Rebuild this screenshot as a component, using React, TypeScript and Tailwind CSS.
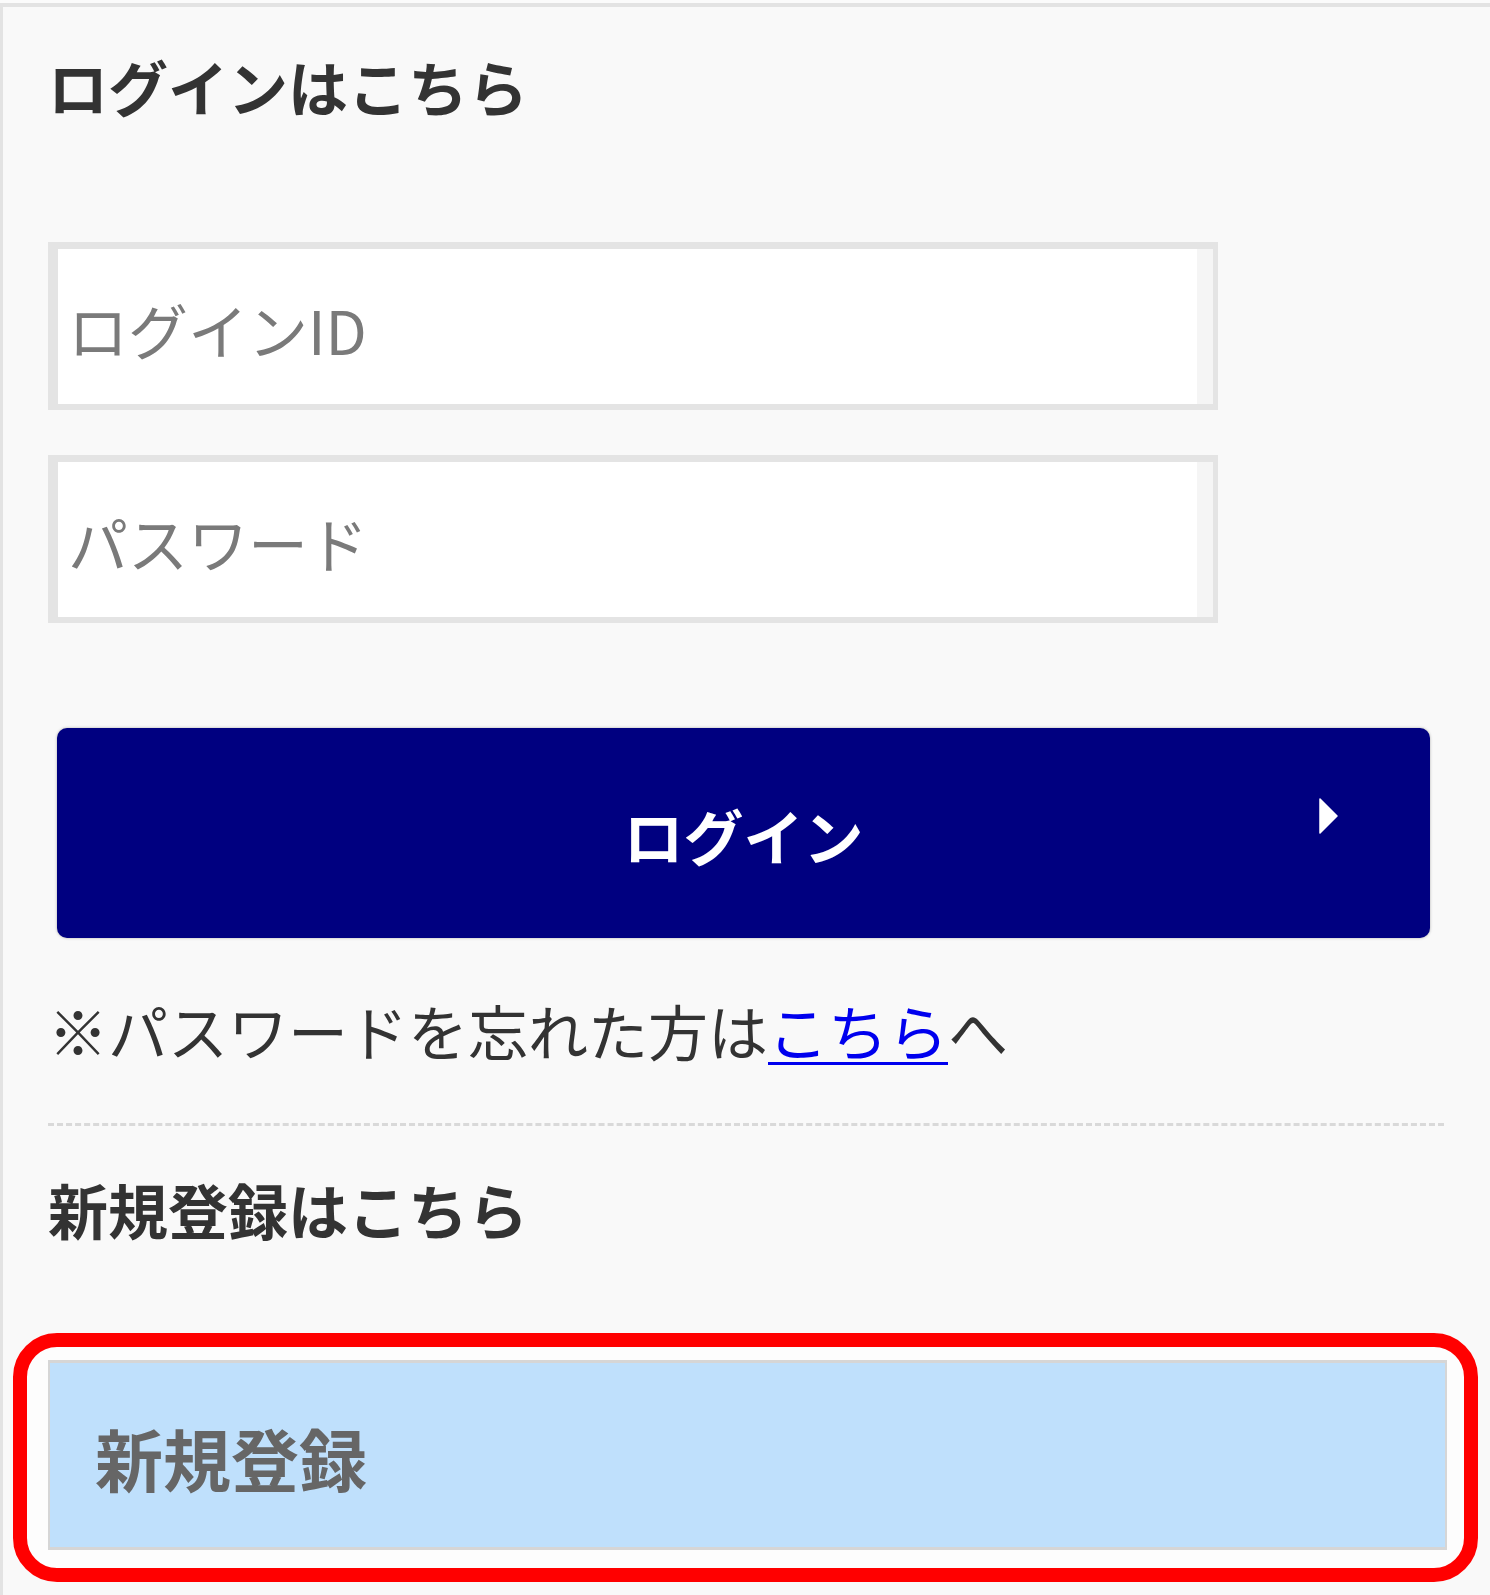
import React from 'react';

// login panel (mobile style, scaled up)
const jp = "font-['Noto_Sans_CJK_JP','Noto_Sans',sans-serif]";

const TextField: React.FC<{ placeholder: string; type?: string; className?: string }> = ({
  placeholder,
  type = 'text',
  className = '',
}) => (
  <div
    className={`flex h-[168px] w-[1170px] items-center border-b-[6px] border-l-[10px] border-r-[5px] border-t-[7px] border-[#e4e4e4] bg-white shadow-[inset_-16px_0_0_#f5f5f5] ${className}`}
  >
    <input
      type={type}
      placeholder={placeholder}
      className={`mt-[4px] w-full bg-transparent pl-[10px] text-[60px] leading-[72px] text-[#333] outline-none placeholder:text-[#7a7a7a] ${jp}`}
    />
  </div>
);

export default function App() {
  return (
    <div className={`min-h-[1595px] w-full bg-[#fbfbfb] pt-[3px] ${jp}`}>
      <div className="flex min-h-[1592px] flex-col border-l-[3px] border-t-[4px] border-[#e3e3e3] bg-[#f9f9f9] pl-[45px] pr-[46px]">
        {/* ログイン */}
        <h2 className="mt-[49px] text-[60px] font-bold leading-[60px] text-[#333]">ログインはこちら</h2>

        <TextField placeholder="ログインID" className="mt-[126px]" />
        <TextField placeholder="パスワード" type="password" className="mt-[45px]" />

        <button
          type="button"
          className="relative ml-[9px] mt-[105px] flex h-[210px] w-[1373px] items-center justify-center rounded-[10px] bg-[#000080] shadow-[0_0_3px_rgba(0,0,0,0.3)]"
        >
          <span className="mt-[4px] text-[60px] font-bold leading-[60px] text-white">ログイン</span>
          <svg
            className="absolute right-[92px] top-[70px]"
            width="19"
            height="36"
            viewBox="0 0 19 36"
          >
            <path d="M1 1 L18 18 L1 35 Z" fill="#fff" stroke="#fff" strokeWidth="1.5" strokeLinejoin="round" />
          </svg>
        </button>

        <p className="mt-[62px] text-[60px] leading-[60px] text-[#333]">
          ※パスワードを忘れた方は
          <a href="#" className="text-[#0000ee] underline decoration-[3px] underline-offset-[6px]">
            こちら
          </a>
          へ
        </p>

        <div className="mt-[63px] border-t-[3px] border-dashed border-[#d9d9d9]" />

        {/* 新規登録 */}
        <h2 className="mt-[53px] text-[60px] font-bold leading-[60px] text-[#333]">新規登録はこちら</h2>

        <div className="-ml-[35px] mt-[94px] w-[1465px] rounded-[44px] border-[14px] border-[#ff0000] bg-[#fdfdfd] pb-[18px] pl-[21px] pr-[17px] pt-[13px]">
          <div className="flex h-[190px] items-center border-b-[3px] border-l-[2px] border-r-[2px] border-t-[3px] border-[#d6d6d6] bg-[#bfe0fc] pl-[45px]">
            <span className="mt-[6px] text-[68px] font-bold leading-[68px] text-[#666]">新規登録</span>
          </div>
        </div>
      </div>
    </div>
  );
}
